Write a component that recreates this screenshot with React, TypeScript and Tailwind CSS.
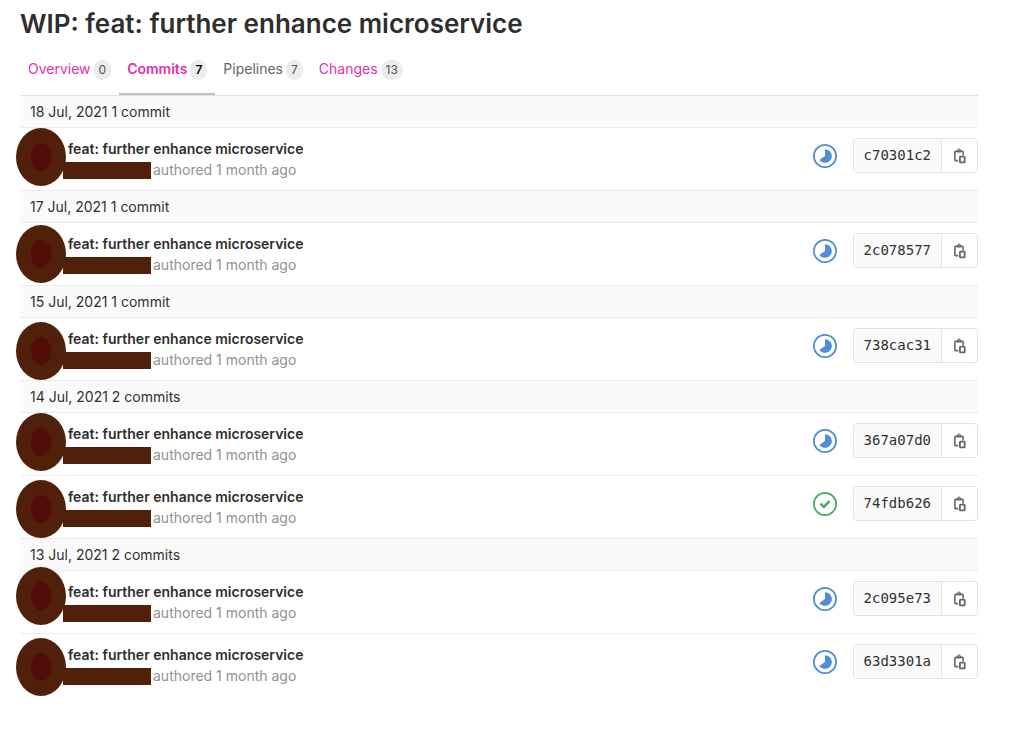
import React from "react";

type Status = "running" | "success";

interface Commit {
  sha: string;
  status: Status;
  mask: string;
}

interface Day {
  date: string;
  commits: Commit[];
}

const TITLE = "feat: further enhance microservice";

const tabs = [
  { label: "Overview", count: 0, link: "text-[#e62eb2]", active: false },
  { label: "Commits", count: 7, link: "text-[#e62eb2]", active: true },
  { label: "Pipelines", count: 7, link: "text-[#666666]", active: false },
  { label: "Changes", count: 13, link: "text-[#e62eb2]", active: false },
];

const days: Day[] = [
  { date: "18 Jul, 2021", commits: [{ sha: "c70301c2", status: "running", mask: "top-0" }] },
  { date: "17 Jul, 2021", commits: [{ sha: "2c078577", status: "running", mask: "top-0.5" }] },
  { date: "15 Jul, 2021", commits: [{ sha: "738cac31", status: "running", mask: "top-1" }] },
  {
    date: "14 Jul, 2021",
    commits: [
      { sha: "367a07d0", status: "running", mask: "top-0" },
      { sha: "74fdb626", status: "success", mask: "top-1" },
    ],
  },
  {
    date: "13 Jul, 2021",
    commits: [
      { sha: "2c095e73", status: "running", mask: "-top-1" },
      { sha: "63d3301a", status: "running", mask: "top-1" },
    ],
  },
];

function StatusIcon({ status }: { status: Status }) {
  const running = status === "running";
  return (
    <svg
      viewBox="0 0 14 14"
      className={running ? "size-6 text-[#528cd6]" : "size-6 text-[#48a860]"}
      fill="currentColor"
      role="img"
      aria-label={running ? "Pipeline running" : "Pipeline passed"}
    >
      <circle cx="7" cy="7" r="6.5" fill="none" stroke="currentColor" />
      {running ? (
        <path d="M7 3c2.2 0 4 1.8 4 4s-1.8 4-4 4c-1.3 0-2.5-.7-3.3-1.7L7 7V3" />
      ) : (
        <path d="M6.278 7.697L5.045 6.464a.296.296 0 0 0-.42-.002l-.613.614a.298.298 0 0 0 .002.42l1.91 1.909a.5.5 0 0 0 .703.005l.265-.265L9.997 6.04a.291.291 0 0 0-.009-.408l-.614-.614a.29.29 0 0 0-.408-.009L6.278 7.697z" />
      )}
    </svg>
  );
}

function CopyIcon() {
  return (
    <svg viewBox="0 0 16 16" className="size-4" fill="none" stroke="currentColor" aria-hidden="true">
      <path d="M6.200 12.600H3.700a.8.8 0 0 1-.8-.8V4a.8.8 0 0 1 .8-.8h6.600a.8.8 0 0 1 .8.8v3.500" strokeWidth="1.600" />
      <path
        d="M4.500 2.400h.8A1.700 1.700 0 0 1 7 .5a1.700 1.700 0 0 1 1.700 1.900h.8v2.200h-5zM7 1.500a.7.700 0 1 0 0 1.400a.7.700 0 0 0 0-1.400z"
        fill="currentColor"
        fillRule="evenodd"
        stroke="none"
      />
      <rect x="7.900" y="8.700" width="4.800" height="5.600" rx="0.600" strokeWidth="1.800" />
    </svg>
  );
}

function CommitRow({ commit }: { commit: Commit }) {
  return (
    <li className="relative flex items-start justify-between border-b border-[#ececec] py-2.5 pl-12 last:border-b-0">
      <span
        className={`absolute -left-1 flex h-[58px] w-[50px] items-center justify-center rounded-[50%] bg-[#50200a] ${commit.mask}`}
        aria-hidden="true"
      >
        <span className="h-7 w-5 rounded-[50%] bg-[#530d08]" />
      </span>
      <div className="text-sm leading-[21px]">
        <a href="#commit" className="block font-semibold text-[#2e2e2e]">
          {TITLE}
        </a>
        <div className="flex items-center text-[#919191]">
          <span className="-ml-[5px] mr-0.5 mt-0.5 h-[17px] w-[88px] bg-[#50200a]" aria-hidden="true" />
          authored 1 month ago
        </div>
      </div>
      <div className="flex items-center gap-4">
        <StatusIcon status={commit.status} />
        <div className="flex h-[35px] rounded border border-[#e3e3e3] text-sm">
          <span className="flex items-center rounded-l bg-[#fafafa] px-2.5 pb-0.5 font-['DejaVu_Sans_Mono',monospace] text-[#303030]">
            {commit.sha}
          </span>
          <button
            type="button"
            aria-label="Copy commit SHA"
            className="flex w-9 items-center justify-center border-l border-[#e3e3e3] text-[#666666]"
          >
            <CopyIcon />
          </button>
        </div>
      </div>
    </li>
  );
}

export default function App() {
  return (
    <main className="bg-white pb-12 pl-5 pr-[46px] font-[Inter,sans-serif] text-[#303030]">
      <h1 className="pt-1 text-[26px] font-semibold leading-10 text-[#2e2e2e]">WIP: feat: further enhance microservice</h1>
      <nav className="mt-2 flex border-b border-[#e1e1e1] text-sm">
        {tabs.map((tab) => (
          <a
            key={tab.label}
            href={`#${tab.label.toLowerCase()}`}
            aria-current={tab.active ? "page" : undefined}
            className={`flex h-[43px] items-start gap-[3px] border-b-2 px-2 pt-[7px] leading-5 ${tab.link} ${
              tab.active ? "border-[#bfbfbf] font-semibold" : "border-transparent"
            }`}
          >
            {tab.label}
            <span
              className={`mt-px rounded-full bg-[#ececec] px-[5px] text-xs leading-5 ${
                tab.active ? "text-black" : "text-[#525252]"
              }`}
            >
              {tab.count}
            </span>
          </a>
        ))}
      </nav>
      {days.map((day) => (
        <section key={day.date} className="group">
          <h2 className="border-b border-[#ececec] bg-[#fafafa] px-2.5 text-sm leading-[31px] font-normal">
            {day.date} {day.commits.length} {day.commits.length === 1 ? "commit" : "commits"}
          </h2>
          <ul className="border-b border-[#ececec] group-last:border-b-0">
            {day.commits.map((commit) => (
              <CommitRow key={commit.sha} commit={commit} />
            ))}
          </ul>
        </section>
      ))}
    </main>
  );
}
